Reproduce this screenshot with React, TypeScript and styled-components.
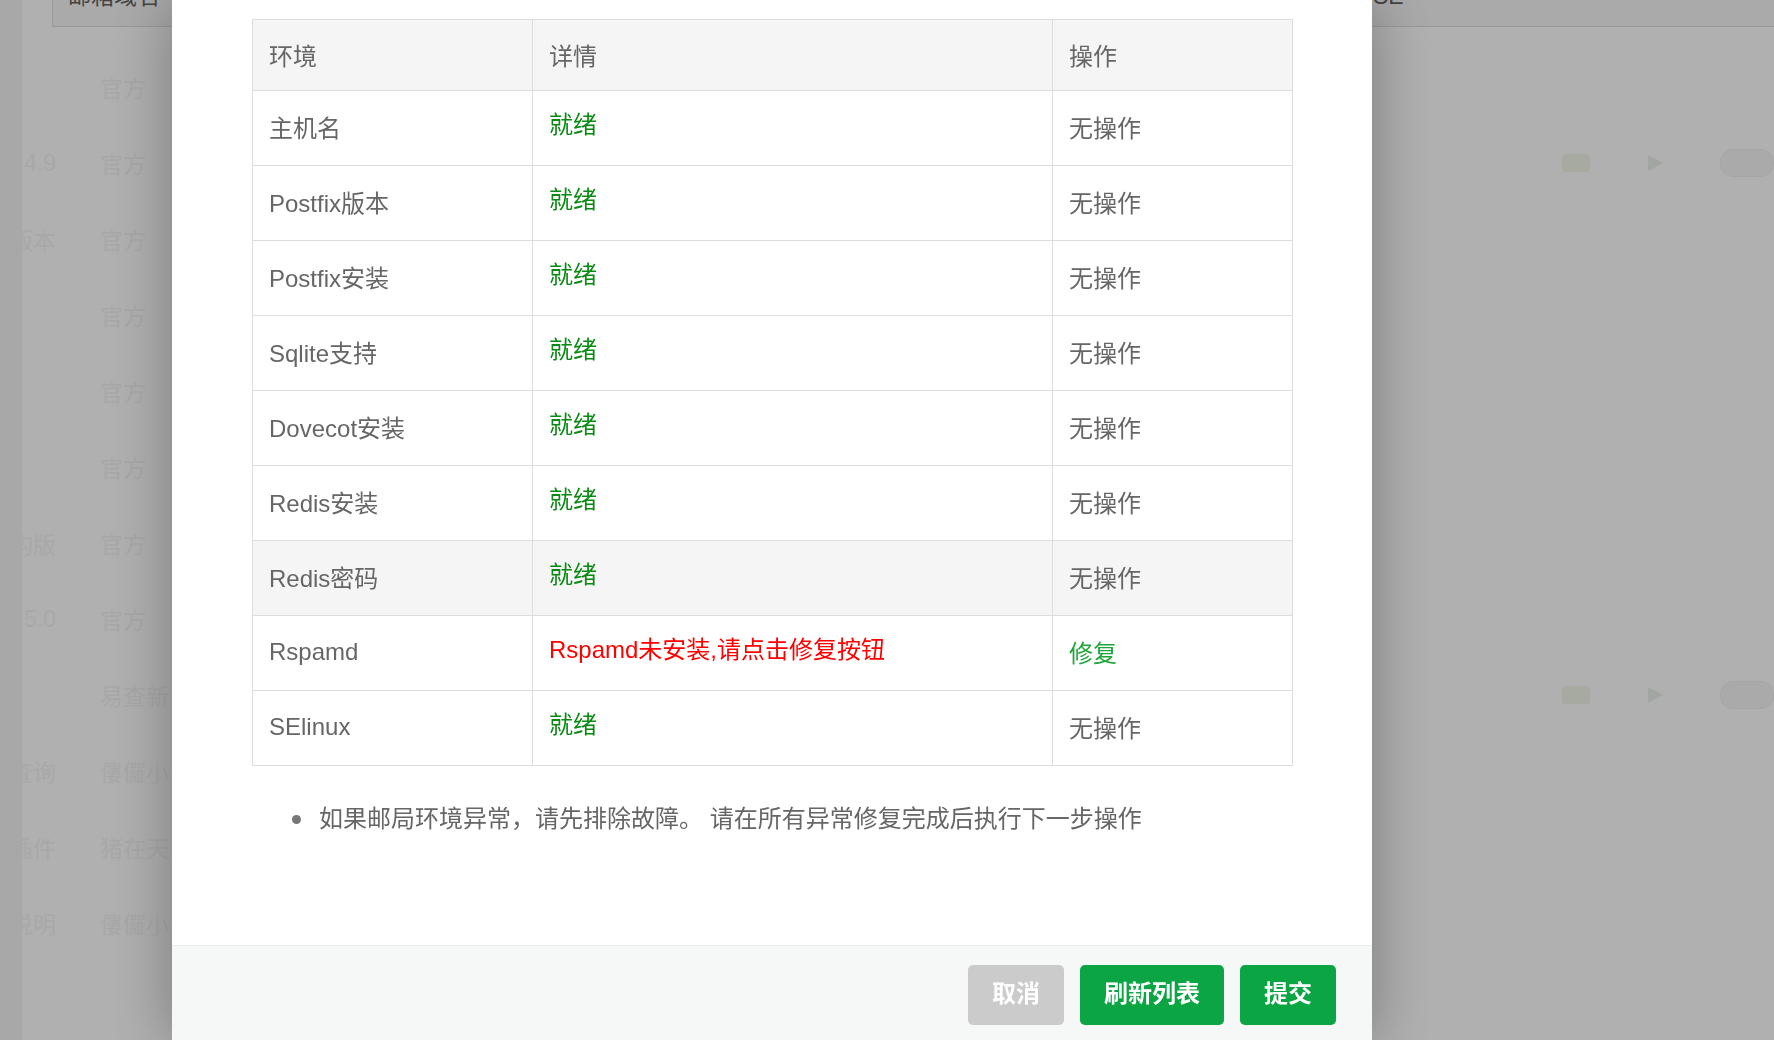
import React from "react";
import styled, { createGlobalStyle } from "styled-components";

const GlobalStyle = createGlobalStyle`
  html, body {
    margin: 0;
    padding: 0;
    height: 100%;
    overflow: hidden;
  }
  body {
    font-family: "Liberation Sans", "Noto Sans CJK SC", sans-serif;
    background: #fff;
  }
`;

type CheckRow = {
  name: string;
  detail: string;
  ok: boolean;
  action?: string;
  hover?: boolean;
};

const rows: CheckRow[] = [
  { name: "主机名", detail: "就绪", ok: true },
  { name: "Postfix版本", detail: "就绪", ok: true },
  { name: "Postfix安装", detail: "就绪", ok: true },
  { name: "Sqlite支持", detail: "就绪", ok: true },
  { name: "Dovecot安装", detail: "就绪", ok: true },
  { name: "Redis安装", detail: "就绪", ok: true },
  { name: "Redis密码", detail: "就绪", ok: true, hover: true },
  { name: "Rspamd", detail: "Rspamd未安装,请点击修复按钮", ok: false, action: "修复" },
  { name: "SElinux", detail: "就绪", ok: true },
];

/* ---------- page behind the dialog ---------- */

const Page = styled.div`
  width: 1774px;
  height: 1040px;
  overflow: hidden;
  background: linear-gradient(to right, #f3f3f3 0, #f3f3f3 22px, #fff 22px);
  display: flex;
  flex-direction: column;
  font-size: 23px;
`;

const ListHead = styled.div`
  margin-left: 52px;
  margin-top: -20px;
  height: 28px;
  flex-shrink: 0;
  box-sizing: content-box;
  padding: 0 0 18px 15px;
  background: #f6f6f6;
  border-left: 1px solid #dedede;
  border-bottom: 1px solid #dedede;
  display: flex;
  align-items: flex-end;
  color: #626262;
  line-height: 24px;
`;

const HeadCell = styled.span<{ $w: number }>`
  width: ${(p) => p.$w}px;
  flex-shrink: 0;
  white-space: nowrap;
`;

const FaintList = styled.div`
  padding-top: 22px;
  display: flex;
  flex-direction: column;
`;

const FaintRow = styled.div`
  height: 76px;
  display: flex;
  align-items: center;
  color: #f4f4f4;
`;

const FaintLead = styled.div`
  width: 56px;
  flex-shrink: 0;
  display: flex;
  justify-content: flex-end;
  white-space: nowrap;
`;

const FaintSource = styled.div`
  margin-left: 44px;
  white-space: nowrap;
`;

const FaintTools = styled.div`
  margin-left: auto;
  display: flex;
  align-items: center;
  gap: 56px;
`;

const FaintBlob = styled.span`
  width: 28px;
  height: 18px;
  border-radius: 4px;
  background: #f2f6e8;
`;

const FaintToggle = styled.span`
  width: 52px;
  height: 26px;
  border-radius: 13px;
  background: #f6f6f6;
  border: 1px solid #f0f0f0;
`;

const Overlay = styled.div`
  position: fixed;
  inset: 0;
  background: rgba(0, 0, 0, 0.31);
`;

/* ---------- dialog ---------- */

const Dialog = styled.div`
  position: fixed;
  left: 172px;
  top: 0;
  width: 1200px;
  height: 1045px;
  background: #fff;
  box-shadow: 0 0 60px rgba(0, 0, 0, 0.32);
  display: flex;
  flex-direction: column;
`;

const Body = styled.div`
  flex: 1;
  padding: 19px 80px 0;
`;

const Table = styled.table`
  width: 1040px;
  border-collapse: collapse;
  table-layout: fixed;
  border: 1px solid #ddd;
  font-size: 24px;
  color: #666;
`;

const Th = styled.th`
  height: 68px;
  padding: 0 16px 2px;
  background: #f5f5f5;
  border: 1px solid #ddd;
  text-align: left;
  font-weight: normal;
  color: #666;
`;

const Tr = styled.tr<{ $hover?: boolean }>`
  background: ${(p) => (p.$hover ? "#f5f5f5" : "#fff")};
`;

const Td = styled.td`
  height: 71px;
  padding: 0 16px 3px;
  border: 1px solid #ddd;
  vertical-align: middle;
  white-space: nowrap;
`;

const Status = styled.span<{ $ok: boolean }>`
  display: inline-block;
  margin-bottom: 8px;
  color: ${(p) => (p.$ok ? "#098a12" : "#ff0000")};
`;

const Fix = styled.span`
  color: #20a53a;
  cursor: pointer;
`;

const Notes = styled.ul`
  list-style: none;
  margin: 37px 0 0;
  padding: 0 0 0 67px;
  font-size: 24px;
  line-height: 32px;
  color: #666;
`;

const Note = styled.li`
  position: relative;
  &::before {
    content: "";
    position: absolute;
    left: -27px;
    top: 12px;
    width: 9px;
    height: 9px;
    border-radius: 50%;
    background: #777;
  }
`;

const Footer = styled.div`
  height: 100px;
  flex-shrink: 0;
  box-sizing: border-box;
  background: #f6f8f8;
  border-top: 1px solid #e9eded;
  display: flex;
  justify-content: flex-end;
  align-items: flex-start;
  gap: 16px;
  padding: 19px 36px 0;
`;

const Button = styled.button<{ $muted?: boolean }>`
  height: 60px;
  padding: 0 24px 8px;
  border: none;
  border-radius: 5px;
  background: ${(p) => (p.$muted ? "#cbcbcb" : "#0ca544")};
  color: #fff;
  font-family: "Liberation Sans", "Noto Sans CJK SC", sans-serif;
  font-size: 24px;
  font-weight: bold;
  cursor: pointer;
`;

const faintLeads = ["", "2.4.9", "PHP版本", "", "", "", "重构版", "5.0", "", "查询", "插件", "说明", "", ""];
const faintSources = ["官方", "官方", "官方", "官方", "官方", "官方", "官方", "官方", "易查新", "僂儸小", "猪在天", "僂儸小", "", ""];

export default function App() {
  return (
    <>
      <GlobalStyle />
      <Page>
        <ListHead>
          <HeadCell $w={1305}>邮箱域名</HeadCell>
          <HeadCell $w={200}>SE</HeadCell>
        </ListHead>
        <FaintList>
          {faintLeads.map((lead, i) => (
            <FaintRow key={i}>
              <FaintLead>{lead}</FaintLead>
              <FaintSource>{faintSources[i]}</FaintSource>
              {(i === 1 || i === 8) && (
                <FaintTools>
                  <FaintBlob />
                  <svg width="18" height="18" viewBox="0 0 18 18">
                    <path d="M2 1 L17 9 L2 17 Z" fill="#eaf1ec" />
                  </svg>
                  <FaintToggle />
                </FaintTools>
              )}
            </FaintRow>
          ))}
        </FaintList>
      </Page>
      <Overlay />
      <Dialog>
        <Body>
          <Table>
            <colgroup>
              <col style={{ width: 280 }} />
              <col style={{ width: 520 }} />
              <col style={{ width: 240 }} />
            </colgroup>
            <thead>
              <tr>
                <Th>环境</Th>
                <Th>详情</Th>
                <Th>操作</Th>
              </tr>
            </thead>
            <tbody>
              {rows.map((r) => (
                <Tr key={r.name} $hover={r.hover}>
                  <Td>{r.name}</Td>
                  <Td>
                    <Status $ok={r.ok}>{r.detail}</Status>
                  </Td>
                  <Td>{r.action ? <Fix>{r.action}</Fix> : "无操作"}</Td>
                </Tr>
              ))}
            </tbody>
          </Table>
          <Notes>
            <Note>如果邮局环境异常，请先排除故障。 请在所有异常修复完成后执行下一步操作</Note>
          </Notes>
        </Body>
        <Footer>
          <Button $muted>取消</Button>
          <Button>刷新列表</Button>
          <Button>提交</Button>
        </Footer>
      </Dialog>
    </>
  );
}
